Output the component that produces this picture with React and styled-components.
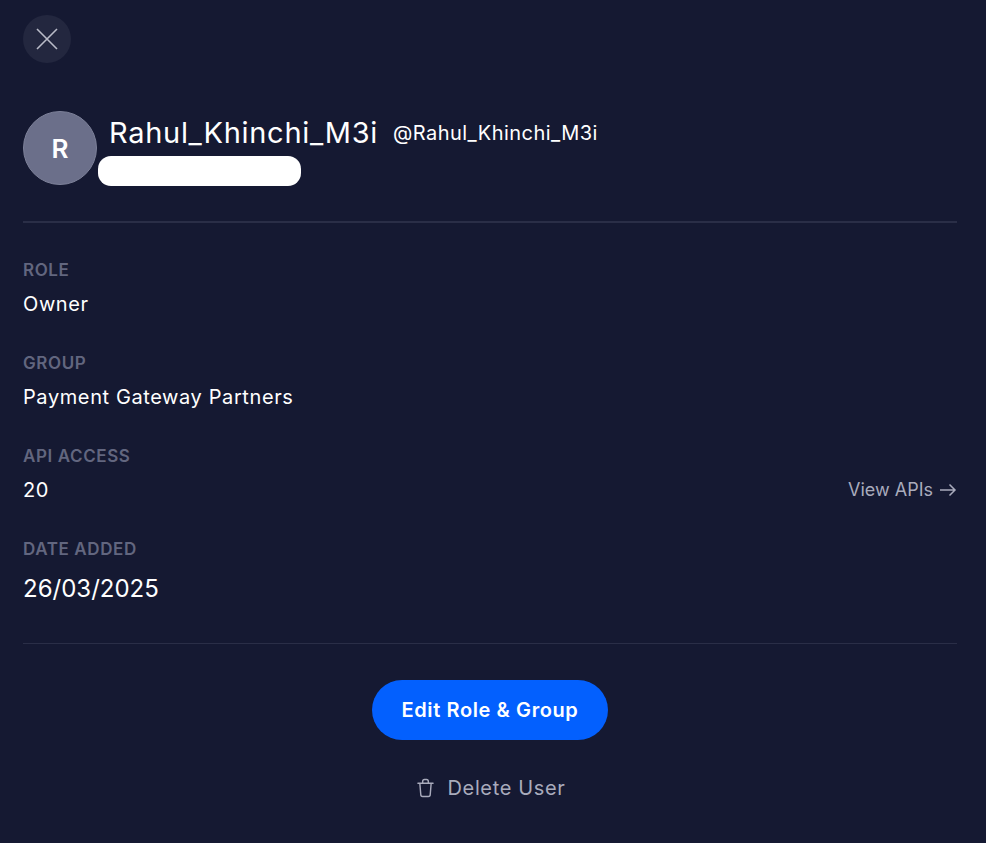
import React from "react";
import styled, { createGlobalStyle } from "styled-components";

const Global = createGlobalStyle`
  html, body { margin: 0; padding: 0; background: #151932; }
  * { box-sizing: border-box; }
`;

const Panel = styled.div`
  width: 986px;
  height: 843px;
  overflow: hidden;
  background: #151932;
  color: #fff;
  font-family: Inter, "Liberation Sans", sans-serif;
  padding: 15px 29px 0 23px;
`;

const CloseButton = styled.button`
  width: 48px;
  height: 48px;
  border: 0;
  padding: 0;
  border-radius: 50%;
  background: #23273f;
  display: flex;
  align-items: center;
  justify-content: center;
  color: #b9bbc8;
`;

const Header = styled.div`
  display: flex;
  align-items: flex-start;
  margin-top: 48px;
  padding-bottom: 35px;
  border-bottom: 2px solid #2a2e47;
`;

const Avatar = styled.div`
  width: 74px;
  height: 74px;
  border-radius: 50%;
  background: #6b6f8a;
  border: 1px solid #7d8199;
  display: flex;
  align-items: center;
  justify-content: center;
  font-size: 26px;
  font-weight: 600;
  flex: none;
`;

const Identity = styled.div`
  margin-left: 1px;
  display: flex;
  flex-direction: column;
`;

const NameRow = styled.div`
  display: flex;
  align-items: baseline;
  gap: 15px;
  margin-left: 11px;
  height: 45px;
  padding-top: 2px;
`;

const Name = styled.span`
  font-size: 29px;
  line-height: 40px;
  letter-spacing: 0.7px;
`;

const Handle = styled.span`
  font-size: 20px;
  letter-spacing: 0.45px;
  position: relative;
  top: -3px;
`;

const Redaction = styled.div`
  width: 203px;
  height: 30px;
  border-radius: 13px;
  background: #fff;
`;

const Details = styled.div`
  display: flex;
  flex-direction: column;
  padding-top: 35px;
  padding-bottom: 22px;
  border-bottom: 1px solid #2a2e47;
`;

const Field = styled.div`
  height: 93px;
  &:last-child { height: 84px; }
`;

const Label = styled.div`
  font-size: 17px;
  line-height: 24px;
  font-weight: 600;
  letter-spacing: 0.6px;
  color: #62667f;
`;

const ValueRow = styled.div`
  display: flex;
  align-items: center;
  justify-content: space-between;
  margin-top: ${(p) => p.$gap || 8}px;
`;

const Value = styled.div`
  font-size: ${(p) => p.$size || 20}px;
  line-height: ${(p) => p.$lh || 28}px;
  letter-spacing: ${(p) => p.$ls ?? 0.6}px;
`;

const ViewLink = styled.a`
  display: flex;
  align-items: center;
  gap: 6px;
  font-size: 18px;
  line-height: 26px;
  color: #a9abbc;
`;

const Actions = styled.div`
  display: flex;
  flex-direction: column;
  align-items: center;
  padding-top: 36px;
`;

const PrimaryButton = styled.button`
  width: 236px;
  height: 60px;
  border: 0;
  border-radius: 30px;
  background: #0360fe;
  color: #fff;
  font-family: inherit;
  font-size: 20px;
  font-weight: 600;
  letter-spacing: 0.6px;
`;

const DeleteButton = styled.button`
  display: flex;
  align-items: center;
  gap: 13px;
  border: 0;
  background: none;
  padding: 0 0 0 3px;
  margin-top: 32px;
  color: #a9abbc;
  font-family: inherit;
  font-size: 20px;
  line-height: 32px;
  letter-spacing: 0.65px;
`;

export default function App() {
  return (
    <>
      <Global />
      <Panel>
        <CloseButton aria-label="Close">
          <svg width="22" height="22" viewBox="0 0 22 22" fill="none" stroke="currentColor" strokeWidth="1.6">
            <path d="M1 1 L21 21 M21 1 L1 21" />
          </svg>
        </CloseButton>
        <Header>
          <Avatar>R</Avatar>
          <Identity>
            <NameRow>
              <Name>Rahul_Khinchi_M3i</Name>
              <Handle>@Rahul_Khinchi_M3i</Handle>
            </NameRow>
            <Redaction />
          </Identity>
        </Header>
        <Details>
          <Field>
            <Label>ROLE</Label>
            <ValueRow><Value>Owner</Value></ValueRow>
          </Field>
          <Field>
            <Label>GROUP</Label>
            <ValueRow><Value>Payment Gateway Partners</Value></ValueRow>
          </Field>
          <Field>
            <Label>API ACCESS</Label>
            <ValueRow>
              <Value>20</Value>
              <ViewLink>
                View APIs
                <svg width="18" height="14" viewBox="0 0 18 14" fill="none" stroke="currentColor" strokeWidth="1.5">
                  <path d="M1 7 H16 M10.5 1.5 L16 7 L10.5 12.5" />
                </svg>
              </ViewLink>
            </ValueRow>
          </Field>
          <Field>
            <Label>DATE ADDED</Label>
            <ValueRow $gap={12}><Value $size={24} $lh={32} $ls={0}>26/03/2025</Value></ValueRow>
          </Field>
        </Details>
        <Actions>
          <PrimaryButton>Edit Role &amp; Group</PrimaryButton>
          <DeleteButton>
            <svg width="17" height="20" viewBox="0 0 18 20" fill="none" stroke="currentColor" strokeWidth="1.5" strokeLinecap="round" strokeLinejoin="round">
              <path d="M1 5 H17 M6 5 V3 A2 2 0 0 1 8 1 H10 A2 2 0 0 1 12 3 V5 M3 5 L4 17 A2 2 0 0 0 6 19 H12 A2 2 0 0 0 14 17 L15 5" />
            </svg>
            Delete User
          </DeleteButton>
        </Actions>
      </Panel>
    </>
  );
}
